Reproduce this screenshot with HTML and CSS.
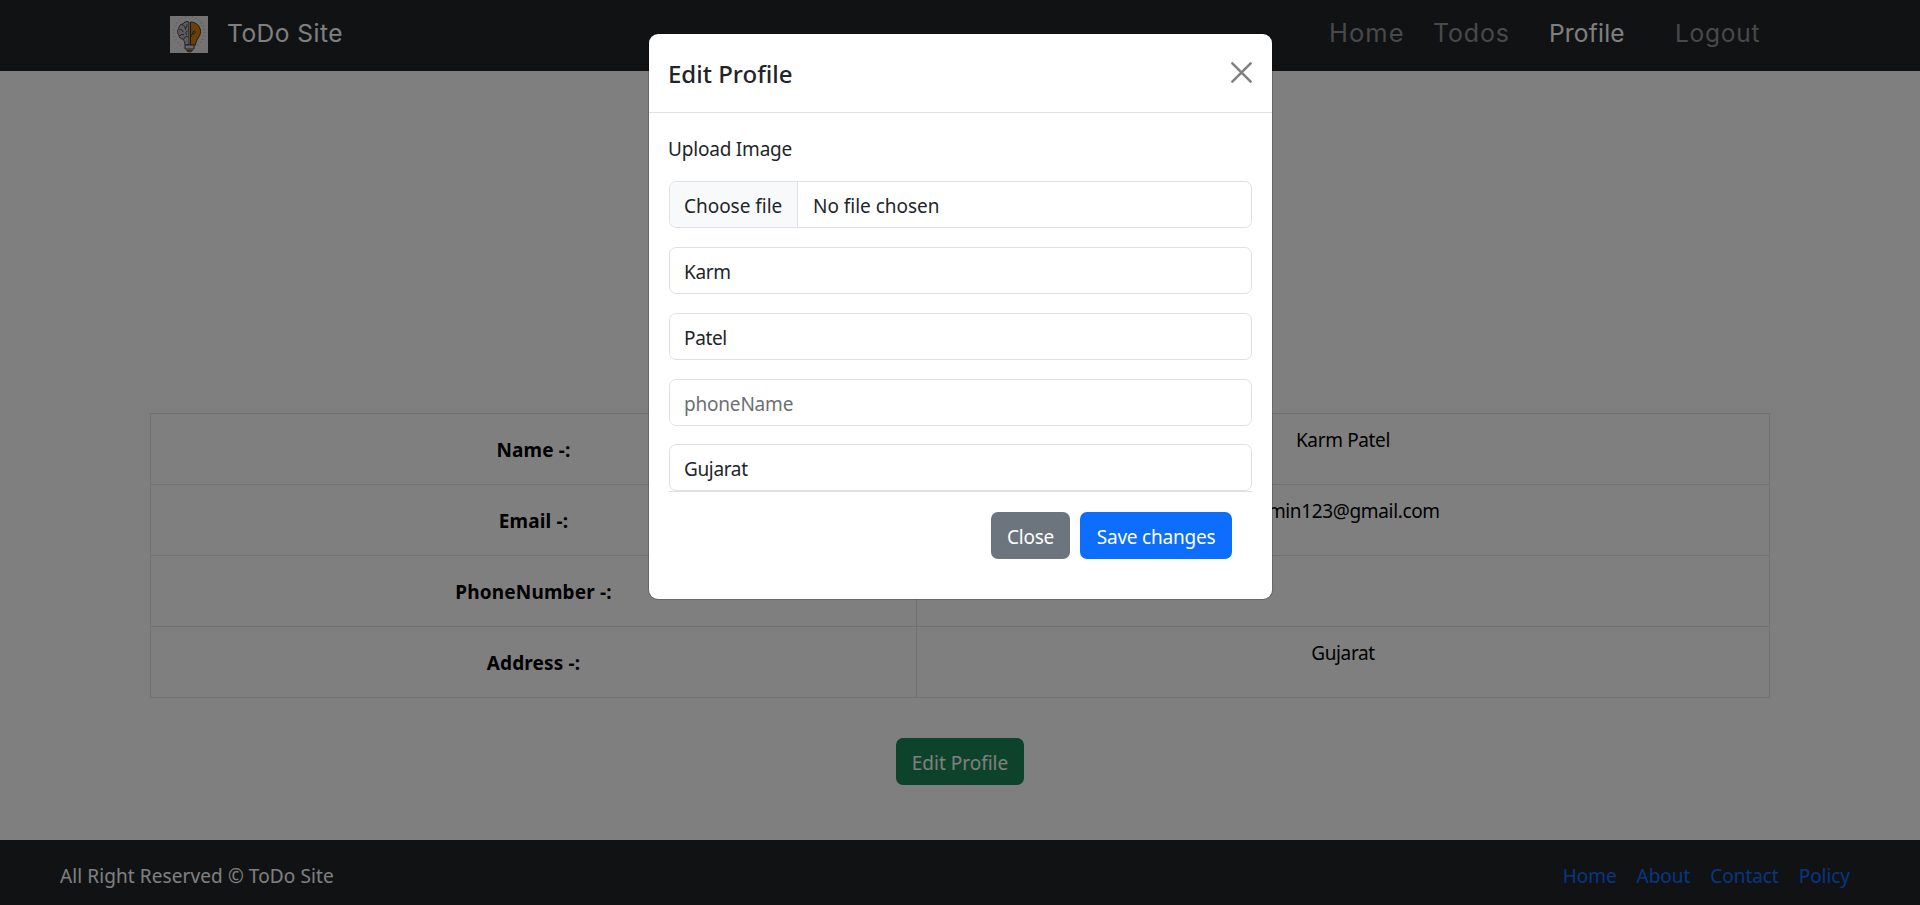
FILE: index.html
```html
<!DOCTYPE html>
<html lang="en">
<head>
<meta charset="utf-8">
<title>ToDo Site</title>
<link rel="stylesheet" href="styles.css">
</head>
<body>
<div class="page">
  <header class="navbar">
    <a class="brand">
      <svg class="logo" viewBox="0 0 38 37">
        <rect width="38" height="37" fill="#e6e6e6"/>
        <circle cx="19" cy="16" r="15.5" fill="none" stroke="#bdbdbd" stroke-width="1.6" stroke-dasharray="1 2.6"/>
        <path d="M19 6c-3-1-5 0-6 2-3 0-4 2-4 4-2 2-2 5 0 7 0 3 2 4 4 4 1 2 2 3 2 6h4z" fill="#b9b9b9" stroke="#444" stroke-width="1"/>
        <path d="M12 9c2 0 3 1 3 3M9 14c2-1 4 0 4 2M17 8v3c-2 0-2 2-1 3M10 20c1-2 3-2 4-1M18 15c-2 0-3 2-1 4M14 23c0-2 2-3 4-2" fill="none" stroke="#444" stroke-width="1"/>
        <path d="M20.500 6c6 0 10 4.500 10 9.500 0 6-4.500 7-5 13.500h-5z" fill="#d87d10" stroke="#3c3429" stroke-width="1"/>
        <path d="M21 21c0-3 1-3 2-3 2 0 3-2 1.500-3-1.500 0-2 1-1.500 3" fill="none" stroke="#3c3429" stroke-width="1"/>
        <path d="M15 29h9v4h-9z" fill="#ccc" stroke="#444" stroke-width="1"/>
        <path d="M16 34h7l-2 2h-3z" fill="#9c5b17" stroke="#444" stroke-width=".6"/>
      </svg>
      <span class="brand-name">ToDo Site</span>
    </a>
    <nav class="nav">
      <a class="nav-home">Home</a>
      <a class="nav-todos">Todos</a>
      <a class="nav-profile">Profile</a>
      <a class="nav-logout">Logout</a>
    </nav>
  </header>
  <main class="content">
    <table class="details">
      <tbody>
        <tr><th>Name -:</th><td>Karm Patel</td></tr>
        <tr><th>Email -:</th><td>admin123@gmail.com</td></tr>
        <tr><th>PhoneNumber -:</th><td></td></tr>
        <tr><th>Address -:</th><td>Gujarat</td></tr>
      </tbody>
    </table>
    <button class="btn edit">Edit Profile</button>
  </main>
  <footer class="footer">
    <span class="rights">All Right Reserved © ToDo Site</span>
    <nav class="links"><a>Home</a><a>About</a><a>Contact</a><a>Policy</a></nav>
  </footer>
</div>
<div class="overlay">
  <section class="modal">
    <div class="modal-header">
      <h1 class="title">Edit Profile</h1>
      <svg class="close" viewBox="0 0 20 20"><path d="M1.300 1.300l17.400 17.400M18.700 1.300L1.300 18.700"/></svg>
    </div>
    <div class="modal-body">
      <label class="label">Upload Image</label>
      <div class="field file"><span class="choose">Choose file</span><span class="none">No file chosen</span></div>
      <input class="field" value="Karm">
      <input class="field" value="Patel">
      <input class="field phone" placeholder="phoneName">
      <input class="field last" value="Gujarat">
      <div class="modal-footer">
        <button class="btn secondary">Close</button>
        <button class="btn primary">Save changes</button>
      </div>
    </div>
  </section>
</div>
</body>
</html>
```
FILE: styles.css
```css
* { box-sizing: border-box; }
body {
  margin: 0;
  font-family: "Noto Sans", "Open Sans", sans-serif;
  font-size: 19px;
  line-height: 30px;
  letter-spacing: -0.35px;
  color: #212529;
  background: #fff;
  overflow: hidden;
}
.page { display: flex; flex-direction: column; height: 905px; }
.navbar {
  display: flex;
  justify-content: space-between;
  height: 71px;
  padding: 0 160px 0 170px;
  background: #212529;
  font-family: Inter, "Open Sans", sans-serif;
  font-size: 24.500px;
  letter-spacing: 0;
}
.brand { display: flex; padding-top: 16px; gap: 19px; color: #fff; }
.logo { width: 38px; height: 37px; }
.brand-name { line-height: 34px; letter-spacing: 0.5px; }
.nav { display: flex; padding-top: 16px; line-height: 34px; color: #909294; }
.nav a { white-space: nowrap; }
.nav-home { width: 104px; font-size: 25.500px; letter-spacing: 1.05px; }
.nav-todos { width: 116px; font-size: 25px; letter-spacing: 0.85px; }
.nav-profile { width: 126px; letter-spacing: 0.2px; color: #fff; }
.nav-logout { width: 85px; letter-spacing: 0.75px; }
.content { flex: 1; display: flex; flex-direction: column; align-items: center; padding-top: 342px; }
.details { width: 1620px; border-collapse: collapse; table-layout: fixed; color: #000; }
.details th, .details td { height: 71px; padding: 11px 10px; border: 1px solid #dee2e6; text-align: center; }
.details th { width: 766px; vertical-align: middle; padding-top: 13px; letter-spacing: 0.15px; }
.details td { vertical-align: top; }
.btn {
  height: 47px;
  border: 0;
  border-radius: 7px;
  padding: 2px 0 0;
  font: inherit;
  letter-spacing: -0.22px;
  color: #fff;
}
.edit { width: 128px; margin-top: 40px; letter-spacing: 0; background: #198754; }
.footer {
  display: flex;
  justify-content: space-between;
  height: 65px;
  padding: 21px 70px 0 60px;
  background: #212529;
  color: #fff;
}
.rights { letter-spacing: 0.1px; }
.links { display: flex; gap: 20px; letter-spacing: -0.05px; color: #0d6efd; }
.overlay { position: absolute; inset: 0; background: rgba(0, 0, 0, 0.5); }
.modal {
  width: 623px;
  height: 565px;
  margin: 34px 0 0 649px;
  background: #fff;
  border-radius: 9px;
  box-shadow: 0 0 0 1px rgba(0, 0, 0, 0.18);
}
.modal-header {
  display: flex;
  justify-content: space-between;
  align-items: center;
  height: 79px;
  padding: 0 20px 2px 19px;
  border-bottom: 1px solid #dee2e6;
}
.title { margin: 3px 0 0; font-size: 24px; font-weight: 500; line-height: 36px; letter-spacing: 0; }
.close { width: 21px; height: 21px; fill: none; stroke: #808080; stroke-width: 2.4; stroke-linecap: round; }
.modal-body { display: flex; flex-direction: column; padding: 21px 20px 0; }
.label { height: 47px; margin-left: -1px; line-height: 30px; letter-spacing: -0.2px; }
.field {
  width: 583px;
  height: 47px;
  margin: 0 0 19px;
  padding: 2px 14px 0;
  border: 1px solid #dee2e6;
  border-radius: 7px;
  background: #fff;
  font: inherit;
  letter-spacing: inherit;
  color: #212529;
  outline: 0;
}
.field::placeholder { color: #6c7075; opacity: 1; }
.file { display: flex; padding: 0; overflow: hidden; line-height: 48px; letter-spacing: -0.03px; }
.choose { width: 128px; padding-left: 14px; background: #f8f9fa; border-right: 1px solid #dee2e6; }
.none { padding-left: 15px; }
.phone { margin-bottom: 18px; letter-spacing: -0.2px; }
.last { margin-bottom: 0; }
.modal-footer {
  display: flex;
  justify-content: flex-end;
  gap: 10px;
  padding: 20px 20px 0;
  border-top: 1px solid #dee2e6;
}
.secondary { width: 79px; background: #6c757d; }
.primary { width: 152px; background: #0d6efd; }
```
